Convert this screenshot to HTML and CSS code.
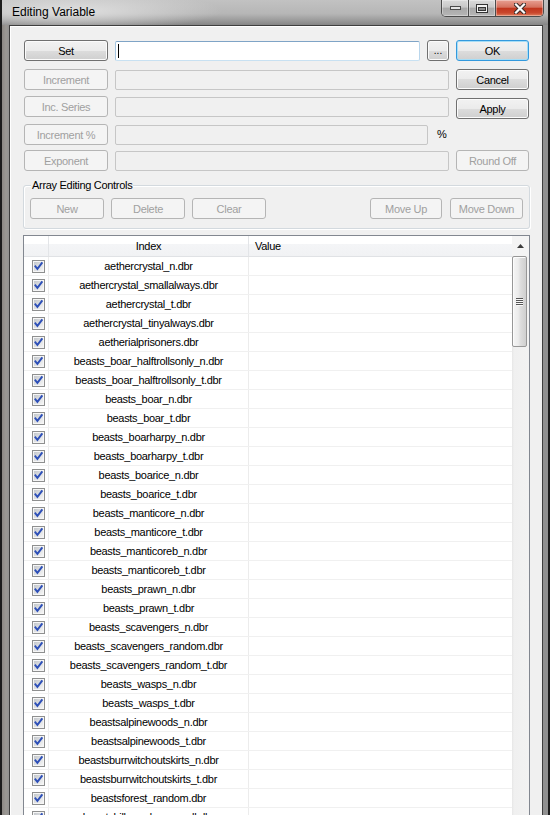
FILE: index.html
```html
<!DOCTYPE html>
<html>
<head>
<meta charset="utf-8">
<title>Editing Variable</title>
<link rel="stylesheet" href="styles.css">
</head>
<body>
<svg class="defs" width="0" height="0">
  <defs>
    <linearGradient id="cbg" x1="0" y1="0" x2="1" y2="1">
      <stop offset="0" stop-color="#c3c7cc"/>
      <stop offset="1" stop-color="#f5f5f5"/>
    </linearGradient>
    <symbol id="chk" viewBox="0 0 13 13">
      <rect x="0.5" y="0.5" width="12" height="12" fill="#f6f6f6" stroke="#8e8f8f"/>
      <rect x="2" y="2" width="9" height="9" fill="url(#cbg)"/>
      <path d="M3.4 6.4 L5.4 8.9 L9.8 3.2" fill="none" stroke="#2d4fb8" stroke-width="1.9" stroke-linecap="square" stroke-linejoin="miter"/>
    </symbol>
  </defs>
</svg>
<div class="window">
  <div class="titlebar">
    <div class="title">Editing Variable</div>
    <div class="caps">
      <div class="cap min"><svg width="11" height="4" viewBox="0 0 11 4"><rect x="0.5" y="0.5" width="10" height="3" fill="#e4e4e4" stroke="#4a4a4a"/></svg></div>
      <div class="cap max"><svg width="12" height="9" viewBox="0 0 12 9"><rect x="0.5" y="0.5" width="11" height="8" fill="#f2f2f2" stroke="#333"/><rect x="2.5" y="3.5" width="7" height="3" fill="#8c8c8c" stroke="#333"/></svg></div>
      <div class="cap close"><svg width="12" height="11" viewBox="0 0 12 11"><path d="M2 1.5 L10 9.5 M10 1.5 L2 9.5" stroke="#3a2a28" stroke-width="4.2" stroke-linecap="square"/><path d="M2 1.5 L10 9.5 M10 1.5 L2 9.5" stroke="#fbfbfb" stroke-width="2.2" stroke-linecap="square"/></svg></div>
    </div>
  </div>
  <div class="client">
    <div class="row">
      <div class="btn">Set</div>
      <div class="mid"><div class="inp act w305"><span class="caret"></span></div><div class="btn dots">...</div></div>
      <div class="btn def">OK</div>
    </div>
    <div class="row r2">
      <div class="btn dis">Increment</div>
      <div class="mid"><div class="inp"></div></div>
      <div class="btn">Cancel</div>
    </div>
    <div class="row r3">
      <div class="btn dis">Inc. Series</div>
      <div class="mid"><div class="inp"></div></div>
      <div class="btn apply">Apply</div>
    </div>
    <div class="row r4">
      <div class="btn dis">Increment %</div>
      <div class="mid"><div class="inp w313"></div><span class="pct">%</span></div>
    </div>
    <div class="row r5">
      <div class="btn dis">Exponent</div>
      <div class="mid"><div class="inp"></div></div>
      <div class="btn dis">Round Off</div>
    </div>

    <div class="group">
      <span class="glabel">Array Editing Controls</span>
      <div class="gbtns">
        <div class="btn dis w74">New</div>
        <div class="btn dis w74">Delete</div>
        <div class="btn dis w74">Clear</div>
        <div class="spacer"></div>
        <div class="btn dis w72">Move Up</div>
        <div class="btn dis w73">Move Down</div>
      </div>
    </div>

    <div class="list">
      <div class="tbl">
        <div class="thead"><div class="c0"></div><div class="c1">Index</div><div class="c2">Value</div></div>
        <div class="tr"><div class="c0"><svg class="cb"><use href="#chk"/></svg></div><div class="c1">aethercrystal_n.dbr</div><div class="c2"></div></div>
        <div class="tr"><div class="c0"><svg class="cb"><use href="#chk"/></svg></div><div class="c1">aethercrystal_smallalways.dbr</div><div class="c2"></div></div>
        <div class="tr"><div class="c0"><svg class="cb"><use href="#chk"/></svg></div><div class="c1">aethercrystal_t.dbr</div><div class="c2"></div></div>
        <div class="tr"><div class="c0"><svg class="cb"><use href="#chk"/></svg></div><div class="c1">aethercrystal_tinyalways.dbr</div><div class="c2"></div></div>
        <div class="tr"><div class="c0"><svg class="cb"><use href="#chk"/></svg></div><div class="c1">aetherialprisoners.dbr</div><div class="c2"></div></div>
        <div class="tr"><div class="c0"><svg class="cb"><use href="#chk"/></svg></div><div class="c1">beasts_boar_halftrollsonly_n.dbr</div><div class="c2"></div></div>
        <div class="tr"><div class="c0"><svg class="cb"><use href="#chk"/></svg></div><div class="c1">beasts_boar_halftrollsonly_t.dbr</div><div class="c2"></div></div>
        <div class="tr"><div class="c0"><svg class="cb"><use href="#chk"/></svg></div><div class="c1">beasts_boar_n.dbr</div><div class="c2"></div></div>
        <div class="tr"><div class="c0"><svg class="cb"><use href="#chk"/></svg></div><div class="c1">beasts_boar_t.dbr</div><div class="c2"></div></div>
        <div class="tr"><div class="c0"><svg class="cb"><use href="#chk"/></svg></div><div class="c1">beasts_boarharpy_n.dbr</div><div class="c2"></div></div>
        <div class="tr"><div class="c0"><svg class="cb"><use href="#chk"/></svg></div><div class="c1">beasts_boarharpy_t.dbr</div><div class="c2"></div></div>
        <div class="tr"><div class="c0"><svg class="cb"><use href="#chk"/></svg></div><div class="c1">beasts_boarice_n.dbr</div><div class="c2"></div></div>
        <div class="tr"><div class="c0"><svg class="cb"><use href="#chk"/></svg></div><div class="c1">beasts_boarice_t.dbr</div><div class="c2"></div></div>
        <div class="tr"><div class="c0"><svg class="cb"><use href="#chk"/></svg></div><div class="c1">beasts_manticore_n.dbr</div><div class="c2"></div></div>
        <div class="tr"><div class="c0"><svg class="cb"><use href="#chk"/></svg></div><div class="c1">beasts_manticore_t.dbr</div><div class="c2"></div></div>
        <div class="tr"><div class="c0"><svg class="cb"><use href="#chk"/></svg></div><div class="c1">beasts_manticoreb_n.dbr</div><div class="c2"></div></div>
        <div class="tr"><div class="c0"><svg class="cb"><use href="#chk"/></svg></div><div class="c1">beasts_manticoreb_t.dbr</div><div class="c2"></div></div>
        <div class="tr"><div class="c0"><svg class="cb"><use href="#chk"/></svg></div><div class="c1">beasts_prawn_n.dbr</div><div class="c2"></div></div>
        <div class="tr"><div class="c0"><svg class="cb"><use href="#chk"/></svg></div><div class="c1">beasts_prawn_t.dbr</div><div class="c2"></div></div>
        <div class="tr"><div class="c0"><svg class="cb"><use href="#chk"/></svg></div><div class="c1">beasts_scavengers_n.dbr</div><div class="c2"></div></div>
        <div class="tr"><div class="c0"><svg class="cb"><use href="#chk"/></svg></div><div class="c1">beasts_scavengers_random.dbr</div><div class="c2"></div></div>
        <div class="tr"><div class="c0"><svg class="cb"><use href="#chk"/></svg></div><div class="c1">beasts_scavengers_random_t.dbr</div><div class="c2"></div></div>
        <div class="tr"><div class="c0"><svg class="cb"><use href="#chk"/></svg></div><div class="c1">beasts_wasps_n.dbr</div><div class="c2"></div></div>
        <div class="tr"><div class="c0"><svg class="cb"><use href="#chk"/></svg></div><div class="c1">beasts_wasps_t.dbr</div><div class="c2"></div></div>
        <div class="tr"><div class="c0"><svg class="cb"><use href="#chk"/></svg></div><div class="c1">beastsalpinewoods_n.dbr</div><div class="c2"></div></div>
        <div class="tr"><div class="c0"><svg class="cb"><use href="#chk"/></svg></div><div class="c1">beastsalpinewoods_t.dbr</div><div class="c2"></div></div>
        <div class="tr"><div class="c0"><svg class="cb"><use href="#chk"/></svg></div><div class="c1">beastsburrwitchoutskirts_n.dbr</div><div class="c2"></div></div>
        <div class="tr"><div class="c0"><svg class="cb"><use href="#chk"/></svg></div><div class="c1">beastsburrwitchoutskirts_t.dbr</div><div class="c2"></div></div>
        <div class="tr"><div class="c0"><svg class="cb"><use href="#chk"/></svg></div><div class="c1">beastsforest_random.dbr</div><div class="c2"></div></div>
        <div class="tr"><div class="c0"><svg class="cb"><use href="#chk"/></svg></div><div class="c1">beastshillsrandom_small.dbr</div><div class="c2"></div></div>
      </div>
      <div class="vscroll">
        <div class="up"><svg width="7" height="4" viewBox="0 0 7 4"><path d="M0 4 L3.5 0 L7 4 Z" fill="#3c3c3c"/></svg></div>
        <div class="thumb"><svg width="7" height="8" viewBox="0 0 7 8"><rect x="0" y="0" width="7" height="1" fill="#555"/><rect x="0" y="2" width="7" height="1" fill="#555"/><rect x="0" y="4" width="7" height="1" fill="#555"/><rect x="0" y="6" width="7" height="1" fill="#555"/><rect x="1" y="1" width="7" height="1" fill="#fafafa"/><rect x="1" y="3" width="7" height="1" fill="#fafafa"/><rect x="1" y="5" width="7" height="1" fill="#fafafa"/><rect x="1" y="7" width="7" height="1" fill="#fafafa"/></svg></div>
      </div>
    </div>
  </div>
</div>
</body>
</html>
```

FILE: styles.css
```css
html, body {
  margin: 0;
  padding: 0;
}
body {
  background: #1e1e1e;
  font-family: "Liberation Sans", Arial, sans-serif;
  font-size: 11px;
  color: #000;
}
.defs {
  position: absolute;
  width: 0;
  height: 0;
}
.window {
  width: 550px;
  height: 815px;
  box-sizing: border-box;
  border-left: 2px solid #1c1c1c;
  border-right: 2px solid #1c1c1c;
  background: linear-gradient(to right, #8c8884 0, #9b9894 4px, #8f8f8f 8px, #909090 100%);
  display: flex;
  flex-direction: column;
  overflow: hidden;
}
.titlebar {
  height: 25px;
  flex: none;
  display: flex;
  align-items: flex-start;
  background:
    radial-gradient(ellipse 150px 20px at 70px 11px, rgba(226,226,226,0.95), rgba(226,226,226,0) 100%),
    linear-gradient(to bottom, #c2c2c2 0, #b6b6b6 55%, #9c9c9c 80%, #858585 100%);
}
.title {
  margin: 5px 0 0 10px;
  font-size: 12px;
  line-height: 15px;
  color: #000;
  letter-spacing: 0;
}
.caps {
  margin-left: auto;
  margin-right: 4px;
  display: flex;
  height: 17px;
  box-sizing: border-box;
  border: 1px solid #4c4c4c;
  border-top: none;
  border-radius: 0 0 5px 5px;
  overflow: hidden;
}
.cap {
  display: flex;
  align-items: center;
  justify-content: center;
  box-shadow: inset 0 0 0 1px rgba(255,255,255,0.35);
}
.cap svg {
  display: block;
}
.min {
  width: 26px;
  background: linear-gradient(to bottom, #dadada 0, #c8c8c8 45%, #a8a8a8 50%, #b6b6b6 100%);
}
.max {
  width: 26px;
  border-left: 1px solid #4c4c4c;
  background: linear-gradient(to bottom, #dadada 0, #c8c8c8 45%, #a8a8a8 50%, #b6b6b6 100%);
}
.close {
  width: 47px;
  border-left: 1px solid #4c4c4c;
  background: linear-gradient(to bottom, #e8a193 0, #d5725f 45%, #c1361e 52%, #c9472d 80%, #e0805f 100%);
}

.client {
  flex: 1;
  min-height: 0;
  overflow: hidden;
  margin: 0 5px 0 7px;
  border: 1px solid #3e3e3e;
  border-bottom: none;
  background: #f0f0f0;
  box-shadow: inset 1px 1px 0 #ffffff;
  padding: 14px 13px 0 14px;
}

.row {
  display: flex;
  gap: 7px;
  height: 21px;
}
.r2 { margin-top: 8px; }
.r3 { margin-top: 6px; }
.r4 { margin-top: 7px; }
.r5 { margin-top: 5px; }
.row > .btn:first-child { width: 84px; }
.row > .btn:last-child { width: 73px; }
.row > .btn:first-child:last-child { width: 84px; }
.mid {
  width: 334px;
  display: flex;
  gap: 7px;
}

.btn {
  box-sizing: border-box;
  height: 21px;
  flex: none;
  border: 1px solid #707070;
  border-radius: 3px;
  background: linear-gradient(to bottom, #f2f2f2 0, #ebebeb 50%, #dddddd 50%, #cfcfcf 100%);
  box-shadow: inset 0 0 0 1px #fbfbfb;
  display: flex;
  align-items: center;
  justify-content: center;
  font-size: 11px;
  letter-spacing: -0.3px;
  color: #000;
  white-space: nowrap;
}
.btn.def {
  border-color: #3399dd;
  box-shadow: inset 0 0 0 1px #a6ddf6;
}
.btn.dis {
  border-color: #b5b5b5;
  background: #f4f4f4;
  box-shadow: none;
  color: #a0a0a0;
}
.btn.dots {
  flex: 1;
  align-items: flex-end;
  padding-bottom: 4px;
  font-size: 10px;
  letter-spacing: 0;
}
.btn.apply {
  margin-top: 2px;
}

.inp {
  flex: 1;
  box-sizing: border-box;
  height: 20px;
  margin-top: 1px;
  border: 1px solid #c6c6c6;
  border-radius: 2px;
  background: #f0f0f0;
  display: flex;
  align-items: center;
}
.inp.act {
  background: #ffffff;
  border-color: #7fa4c6 #b9d6ec #c8e1f2 #a5c4de;
}
.inp.w305 { flex: none; width: 305px; }
.inp.w313 { flex: none; width: 313px; }
.caret {
  width: 1px;
  height: 14px;
  margin-left: 2px;
  background: #000;
}
.pct {
  margin-left: 2px;
  line-height: 21px;
  color: #000;
}

.group {
  position: relative;
  margin: 14px -1px 0 -1px;
  border: 1px solid #d3d9de;
  border-radius: 3px;
  box-shadow: inset 1px 1px 0 #ffffff, 1px 1px 0 #ffffff;
  padding: 12px 6px 9px 6px;
}
.glabel {
  position: absolute;
  top: -7px;
  left: 7px;
  padding: 0 1px;
  background: #f0f0f0;
  line-height: 13px;
  letter-spacing: -0.3px;
}
.gbtns {
  display: flex;
  gap: 7px;
}
.spacer { flex: 1; }
.w74 { width: 74px; }
.w72 { width: 72px; }
.w73 { width: 73px; margin-left: 1px; }

.list {
  margin: 6px -1px 0 -1px;
  border: 1px solid #828790;
  background: #ffffff;
  display: flex;
}
.tbl {
  flex: 1;
}
.thead {
  display: flex;
  height: 20px;
  border-bottom: 1px solid #e0e2e5;
  background: linear-gradient(to bottom, #ffffff 0, #ffffff 40%, #f4f5f7 40%, #f1f2f4 100%);
  line-height: 20px;
}
.thead .c0, .thead .c1 {
  border-right: 1px solid #e3e5e8;
}
.c0 {
  width: 24px;
  flex: none;
}
.c1 {
  width: 199px;
  flex: none;
  text-align: center;
  white-space: nowrap;
  overflow: hidden;
  letter-spacing: -0.3px;
}
.c2 {
  flex: 1;
  letter-spacing: -0.3px;
}
.thead .c2 {
  padding-left: 6px;
}
.tr {
  display: flex;
  height: 18px;
  border-bottom: 1px solid #f0f0f0;
  line-height: 18px;
}
.tr .c0, .tr .c1 {
  border-right: 1px solid #ececec;
}
.cb {
  display: block;
  width: 13px;
  height: 13px;
  margin: 3px 0 0 8px;
}

.vscroll {
  width: 17px;
  flex: none;
  display: flex;
  flex-direction: column;
  background: linear-gradient(to right, #e6e6e6 0, #f0f0f0 2px, #f2f2f2 100%);
}
.up {
  height: 20px;
  flex: none;
  display: flex;
  align-items: center;
  justify-content: center;
  background: #f4f4f4;
}
.up svg { display: block; }
.thumb {
  width: 15px;
  height: 91px;
  box-sizing: border-box;
  border: 1px solid #979797;
  border-radius: 2px;
  background: linear-gradient(to right, #f5f5f5 0, #ececec 40%, #dcdcdc 60%, #cfcfcf 100%);
  box-shadow: inset 1px 1px 0 #fcfcfc;
  display: flex;
  align-items: center;
  justify-content: center;
}
.thumb svg { display: block; }
```
